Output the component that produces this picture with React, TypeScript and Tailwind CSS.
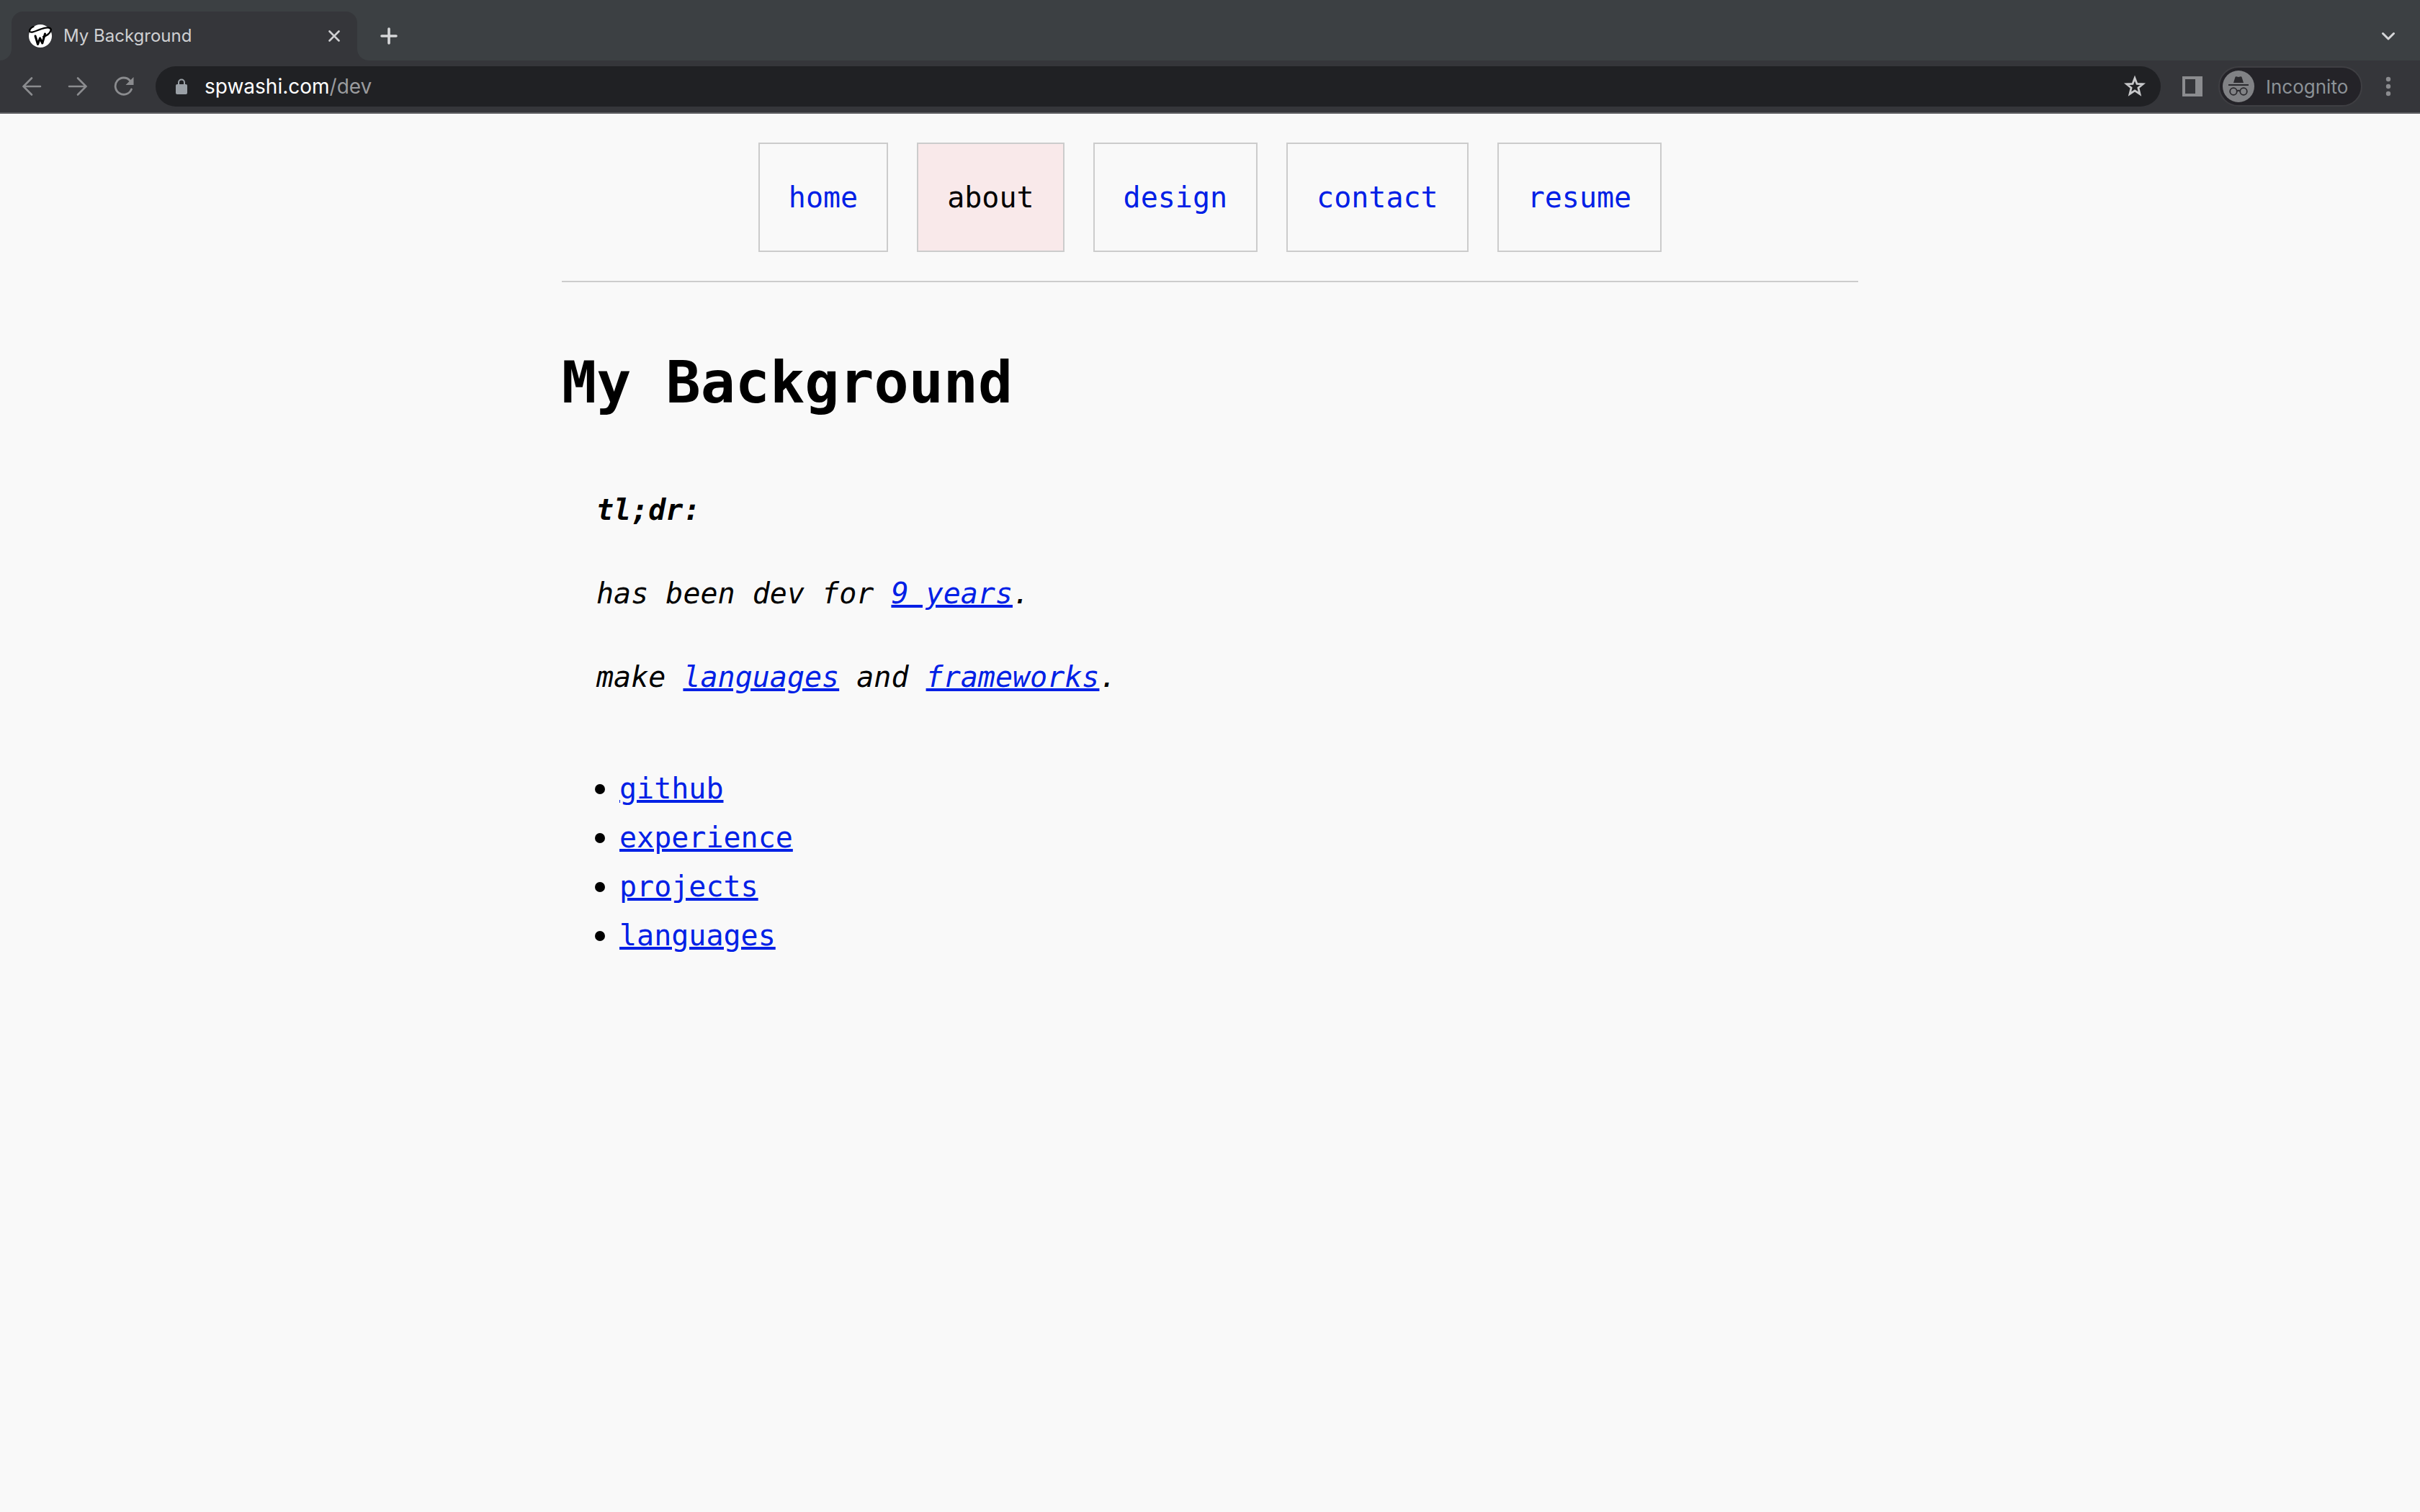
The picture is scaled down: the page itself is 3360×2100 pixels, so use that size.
const iconButton = "grid h-10 w-10 shrink-0 place-items-center text-[#8b8c8f]";

function Favicon() {
  return (
    <svg className="h-8 w-8 shrink-0" viewBox="0 0 32 32" fill="none" aria-hidden="true">
      <circle cx="16" cy="16" r="16" fill="#fff" />
      <path d="M6.500 3C3 4 0 8 1.500 10C4 13 14 6.500 22 4.800C29 3.500 32 5.500 30.500 8.500C29 12.500 25 15.500 20 17" stroke="#000" strokeWidth="2.200" strokeLinecap="round" />
      <path d="M9 16L12.500 27.500L15.500 19L18.800 26L22.500 13" stroke="#000" strokeWidth="3" strokeLinecap="round" strokeLinejoin="round" />
    </svg>
  );
}

function TabStrip() {
  return (
    <div className="flex h-21 items-end bg-[#3c4043] pr-6">
      <div className="h-4 w-4 bg-[#35363a]">
        <div className="h-4 w-4 rounded-br-2xl bg-[#3c4043]" />
      </div>
      <div className="flex h-17 w-120 items-center gap-4 rounded-t-2xl bg-[#35363a] pr-3 pl-6 text-[#cfd0d2]">
        <Favicon />
        <span className="grow text-2xl">My Background</span>
        <button type="button" aria-label="Close tab" className="grid h-10 w-10 place-items-center">
          <svg className="h-4 w-4" viewBox="0 0 16 16" stroke="currentColor" strokeWidth="2.600" strokeLinecap="round" aria-hidden="true">
            <path d="M1.500 1.500L14.500 14.500M14.500 1.500L1.500 14.500" />
          </svg>
        </button>
      </div>
      <div className="h-4 w-4 bg-[#35363a]">
        <div className="h-4 w-4 rounded-bl-2xl bg-[#3c4043]" />
      </div>
      <button type="button" aria-label="New tab" className="ml-1 grid h-17 w-12 place-items-center text-[#d6d7d9]">
        <svg className="h-6 w-6" viewBox="0 0 24 24" stroke="currentColor" strokeWidth="3.600" strokeLinecap="round" aria-hidden="true">
          <path d="M12 2V22M2 12H22" />
        </svg>
      </button>
      <button type="button" aria-label="Search tabs" className="ml-auto grid h-17 w-10 place-items-center text-[#d6d7d9]">
        <svg className="h-3 w-5" viewBox="0 0 20 12" fill="none" stroke="currentColor" strokeWidth="3" strokeLinecap="round" strokeLinejoin="round" aria-hidden="true">
          <path d="M2.500 2.500L10 10L17.500 2.500" />
        </svg>
      </button>
    </div>
  );
}

function Toolbar() {
  return (
    <div className="flex h-[74px] items-center border-b-2 border-[#5f6064] bg-[#35363a] pl-6">
      <div className="flex gap-6">
        <button type="button" aria-label="Back" className={iconButton}>
          <svg className="h-7 w-7" viewBox="0 0 28 28" fill="none" stroke="currentColor" strokeWidth="2.600" strokeLinecap="round" aria-hidden="true">
            <path d="M26 14H2.500M14 2.500L2.500 14L14 25.500" />
          </svg>
        </button>
        <button type="button" aria-label="Forward" className={iconButton}>
          <svg className="h-7 w-7" viewBox="0 0 28 28" fill="none" stroke="currentColor" strokeWidth="2.600" strokeLinecap="round" aria-hidden="true">
            <path d="M2 14H25.500M14 2.500L25.500 14L14 25.500" />
          </svg>
        </button>
        <button type="button" aria-label="Reload" className={iconButton}>
          <svg className="h-7 w-7" viewBox="0 0 28 28" fill="none" aria-hidden="true">
            <path d="M24.500 18A11.600 11.600 0 1 1 22.500 6" stroke="currentColor" strokeWidth="2.800" strokeLinecap="round" />
            <path d="M27.500 1V12H16.500Z" fill="currentColor" />
          </svg>
        </button>
      </div>
      <div className="ml-6 flex h-14 grow items-center rounded-full bg-[#202124] pr-4 pl-7">
        <svg className="h-6 w-4 shrink-0 text-[#9aa0a6]" viewBox="0 0 16 24" aria-hidden="true">
          <path d="M4 10V6.500A4 4 0 0 1 12 6.500V10" fill="none" stroke="currentColor" strokeWidth="2" />
          <rect y="9" width="16" height="14" rx="2" fill="currentColor" />
        </svg>
        <a href="#top" className="ml-6 grow text-[28px] text-white">
          spwashi.com<span className="text-[#9a9b9e]">/dev</span>
        </a>
        <button type="button" aria-label="Bookmark this tab" className="grid h-10 w-10 place-items-center text-[#c8c9cb]">
          <svg className="h-8 w-8" viewBox="0 0 32 32" fill="none" stroke="currentColor" strokeWidth="2.800" aria-hidden="true">
            <path d="M16 4.500L19 12.400L27.300 12.800L20.900 18L23 26.500L16 21.900L9 26.500L11.100 18L4.700 12.800L13 12.400Z" />
          </svg>
        </button>
      </div>
      <button type="button" aria-label="Side panel" className="ml-6 grid h-10 w-10 shrink-0 place-items-center text-[#8b8c8f]">
        <svg className="h-7 w-7" viewBox="0 0 28 28" fill="currentColor" fillRule="evenodd" aria-hidden="true">
          <path d="M0 0H28V28H0ZM4 4V24H18V4Z" />
        </svg>
      </button>
      <button type="button" className="ml-4 flex h-14 w-50 shrink-0 items-center gap-4 rounded-full border-2 border-[#3f3f43] bg-[#242328] pl-1 text-[26px] text-[#8c9297]">
        <svg className="h-11 w-11 shrink-0" viewBox="0 0 44 44" fill="none" aria-hidden="true">
          <circle cx="22" cy="22" r="22" fill="#818285" />
          <path d="M15 17L17.500 9Q18 8 19 8.300L22 9L25 8.300Q26 8 26.500 9L29 17Z" fill="#2b2a2e" />
          <path d="M8 20H36" stroke="#2b2a2e" strokeWidth="2" />
          <g stroke="#2b2a2e" strokeWidth="1.800">
            <circle cx="15" cy="29" r="4.800" />
            <circle cx="29" cy="29" r="4.800" />
            <path d="M20 28.500Q22 27 24 28.500" />
          </g>
        </svg>
        Incognito
      </button>
      <button type="button" aria-label="Menu" className="mr-6 ml-4 grid h-10 w-10 shrink-0 place-items-center text-[#8b8c8f]">
        <svg className="h-7 w-2" viewBox="0 0 8 28" fill="currentColor" aria-hidden="true">
          <circle cx="4" cy="4" r="3.200" />
          <circle cx="4" cy="14" r="3.200" />
          <circle cx="4" cy="24" r="3.200" />
        </svg>
      </button>
    </div>
  );
}

const navItems = ["home", "about", "design", "contact", "resume"];
const links = ["github", "experience", "projects", "languages"];

function TextLink({ children }: { children: string }) {
  return (
    <a href={"#" + children} className="text-[#0020e6] underline decoration-4 underline-offset-2">
      {children}
    </a>
  );
}

export default function App() {
  return (
    <div id="top" className="min-h-screen bg-[#f9f9f9] text-black">
      <header className="font-['Inter',sans-serif]">
        <TabStrip />
        <Toolbar />
      </header>
      <div className="mx-auto max-w-[1800px] font-['DejaVu_Sans_Mono',monospace] text-[40px] leading-[68px]">
        <nav className="flex justify-center gap-10 border-b-2 border-[#cccccc] py-10">
          {navItems.map((item) => (
            <a
              key={item}
              href={"#" + item}
              aria-current={item === "about" ? "page" : undefined}
              className={
                item === "about"
                  ? "border-2 border-[#cccccc] bg-[#f9e9ea] p-10"
                  : "border-2 border-[#cccccc] p-10 text-[#0020e6]"
              }
            >
              {item}
            </a>
          ))}
        </nav>
        <main className="pt-23">
          <h1 className="text-[80px] leading-24 font-bold">My Background</h1>
          <section className="mt-[94px] flex flex-col gap-12 pl-12 italic">
            <p className="font-bold">tl;dr:</p>
            <p>
              has been dev for <TextLink>9 years</TextLink>.
            </p>
            <p>
              make <TextLink>languages</TextLink> and <TextLink>frameworks</TextLink>.
            </p>
          </section>
          <ul className="mt-[86px] list-disc pl-20">
            {links.map((link) => (
              <li key={link} className="h-17 marker:text-[44px]">
                <TextLink>{link}</TextLink>
              </li>
            ))}
          </ul>
        </main>
      </div>
    </div>
  );
}
